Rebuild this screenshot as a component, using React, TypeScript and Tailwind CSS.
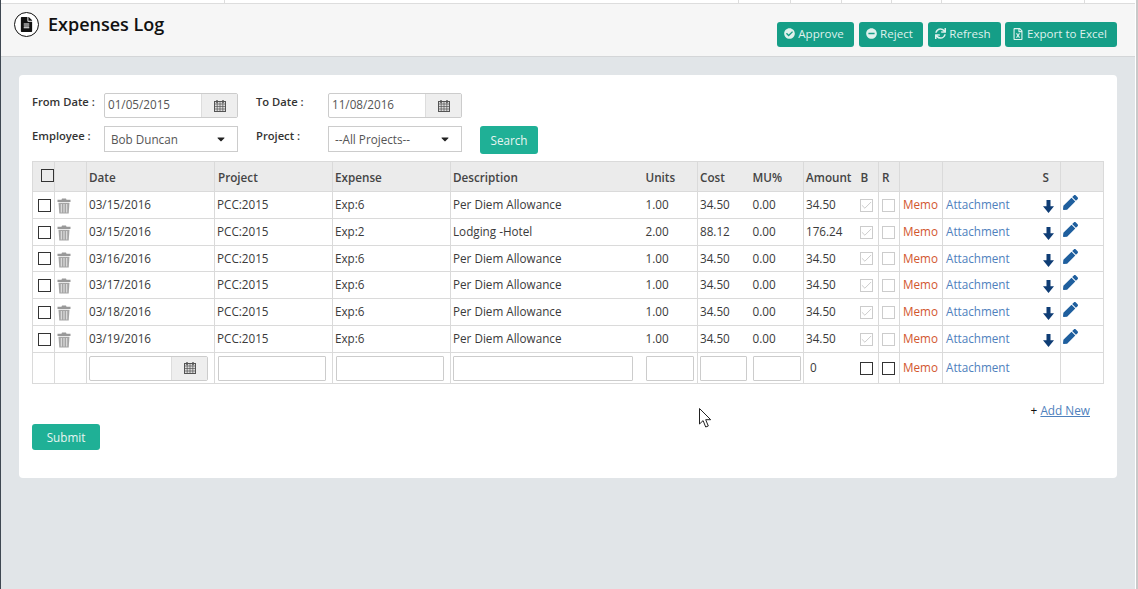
import { Check } from "lucide-react";
import { FaCaretDown, FaCheckCircle, FaFileAlt, FaMinusCircle, FaPen, FaRegFileExcel, FaSync } from "react-icons/fa";

const rows = [
  { date: "03/15/2016", expense: "Exp:6", description: "Per Diem Allowance", units: "1.00", cost: "34.50", amount: "34.50", height: "h-[27px]" },
  { date: "03/15/2016", expense: "Exp:2", description: "Lodging -Hotel", units: "2.00", cost: "88.12", amount: "176.24", height: "h-[27px]" },
  { date: "03/16/2016", expense: "Exp:6", description: "Per Diem Allowance", units: "1.00", cost: "34.50", amount: "34.50", height: "h-[26px]" },
  { date: "03/17/2016", expense: "Exp:6", description: "Per Diem Allowance", units: "1.00", cost: "34.50", amount: "34.50", height: "h-[27px]" },
  { date: "03/18/2016", expense: "Exp:6", description: "Per Diem Allowance", units: "1.00", cost: "34.50", amount: "34.50", height: "h-[27px]" },
  { date: "03/19/2016", expense: "Exp:6", description: "Per Diem Allowance", units: "1.00", cost: "34.50", amount: "34.50", height: "h-[27px]" },
];

// some neighbouring columns share no divider in the table
const td = "border border-[#dadada] pl-[2px] pr-0 py-0 align-middle";
const tdR = "border-y border-l border-r-0 border-[#dadada] pl-[2px] pr-0 py-0 align-middle";
const tdL = "border-y border-r border-l-0 border-[#dadada] pl-[2px] pr-0 py-0 align-middle";
const th = "text-left font-semibold text-[#444] text-[11.7px]";
const labelClass = "w-[72px] text-[11.2px] font-semibold text-[#333]";

const CalendarIcon = () => (
  <svg width="12" height="12" viewBox="0 0 12 12" fill="none" stroke="#555" strokeWidth="1">
    <rect x="0.5" y="1.5" width="11" height="10" fill="#ddd" />
    <path d="M0.5 4h11M0.5 6.5h11M0.5 9h11M3.2 1.5v10M6 1.5v10M8.8 1.5v10" strokeWidth="0.7" />
    <path d="M3 0v3M9 0v3" strokeWidth="1.4" />
  </svg>
);

const TrashIcon = () => (
  <svg width="14" height="16" viewBox="0 0 14 16" className="mt-[2px]">
    <path d="M5 0.5h4l.5 1.2h4V4H.5V1.7h4z" fill="#999" />
    <path d="M1.5 4.8h11l-.8 10.7H2.3z" fill="#a5a5a5" />
    <path d="M4.3 6v8.5M7 6v8.5M9.7 6v8.5" stroke="#e6e6e6" strokeWidth="1" />
  </svg>
);

const ArrowIcon = () => (
  <svg width="11" height="13" viewBox="0 0 11 13" className="mt-[4px]">
    <path d="M3.5 0h4v6.2H11L5.5 13 0 6.2h3.5z" fill="#0f3d75" />
  </svg>
);

const DateField = ({ value, width }: { value: string; width: string }) => (
  <div className={`flex h-[25px] ${width} border border-[#ccc] rounded-[2px] bg-white`}>
    <div className="flex-1 pl-[3px] text-[11.7px] leading-[21px] text-[#555]">{value}</div>
    <div className="w-[36px] flex items-center justify-center bg-[#eee] border-l border-[#ddd]">
      <CalendarIcon />
    </div>
  </div>
);

const SelectField = ({ value }: { value: string }) => (
  <div className="flex items-center justify-between h-[26px] w-[134px] border border-[#ccc] bg-white pl-[6px] pr-[10px]">
    <span className="pt-[2px] text-[11.7px] text-[#555]">{value}</span>
    <FaCaretDown className="text-[#222] text-[12px]" />
  </div>
);

const Box = ({ checked, dark }: { checked?: boolean; dark?: boolean }) => (
  <div className={`w-[13px] h-[13px] border flex items-center justify-center ${dark ? "border-[#333]" : "border-[#ccc]"}`}>
    {checked && <Check className="w-[13px] h-[13px] shrink-0 text-[#bbb]" strokeWidth={1.4} />}
  </div>
);

const TextBox = ({ width }: { width: string }) => (
  <div className={`h-[25px] ${width} border border-[#ccc] bg-white rounded-[1px]`} />
);

const ActionButton = ({ icon, label, width }: { icon: React.ReactNode; label: string; width: string }) => (
  <button className={`h-[25px] ${width} flex items-center justify-center gap-[3px] pr-[3px] pb-[2px] rounded-[3px] bg-[#159e87] text-[11.6px] text-[#dff1ed]`}>
    {icon}
    {label}
  </button>
);

export default function App() {
  return (
    <div className="relative flex h-[589px] w-[1138px] overflow-hidden bg-white font-['Open_Sans',sans-serif]">
      <div className="w-[1135px] h-full bg-[#e1e5e8] border-l border-[#3f4852]">
        {/* Top strip */}
        <div className="flex h-[4px] bg-white border-b border-[#ddd]">
          <div className="w-[224px] border-r border-[#ddd]" />
          <div className="w-[514px] border-r border-[#ddd]" />
          <div className="w-[52px] border-r border-[#ddd]" />
          <div className="w-[51px] border-r border-[#ddd]" />
          <div className="w-[50px] border-r border-[#ddd]" />
          <div className="w-[50px] border-r border-[#ddd]" />
          <div className="w-[143px] border-r border-[#ddd]" />
        </div>

        {/* Header */}
        <div className="flex h-[53px] items-start justify-between bg-[#f6f6f6] border-b border-[#d4d6d8] pl-[13px] pr-[18px]">
          <div className="flex items-start gap-[9px] pt-[8px]">
            <div className="flex h-[25px] w-[25px] items-center justify-center rounded-full border border-[#111] bg-white">
              <FaFileAlt className="text-[15px] text-[#111]" />
            </div>
            <h1 className="text-[18px] leading-[25px] font-semibold text-[#111]">Expenses Log</h1>
          </div>
          <div className="flex gap-[5px] pt-[18px]">
            <ActionButton icon={<FaCheckCircle className="text-[11px]" />} label="Approve" width="w-[77px]" />
            <ActionButton icon={<FaMinusCircle className="text-[11px]" />} label="Reject" width="w-[64px]" />
            <ActionButton icon={<FaSync className="text-[11px]" />} label="Refresh" width="w-[73px]" />
            <div className="-ml-[1px]">
              <ActionButton icon={<FaRegFileExcel className="text-[12px]" />} label="Export to Excel" width="w-[112px]" />
            </div>
          </div>
        </div>

        {/* Card */}
        <div className="ml-[18px] mt-[18px] h-[403px] w-[1098px] rounded-[4px] bg-white pl-[13px] pt-[18px]">
          <div className="flex">
            <div className={`${labelClass} pt-[1px]`}>From Date :</div>
            <DateField value="01/05/2015" width="w-[134px]" />
            <div className={`${labelClass} ml-[18px] pt-[1px]`}>To Date :</div>
            <DateField value="11/08/2016" width="w-[134px]" />
          </div>
          <div className="flex mt-[8px] items-start h-[28px]">
            <div className={`${labelClass} pt-[2px]`}>Employee :</div>
            <SelectField value="Bob Duncan" />
            <div className={`${labelClass} ml-[18px] pt-[2px]`}>Project :</div>
            <SelectField value="--All Projects--" />
            <button className="ml-[18px] h-[28px] w-[58px] rounded-[3px] bg-[#1fb096] pt-[2px] text-[11.7px] text-[#e8f5f2]">Search</button>
          </div>

          {/* Expenses table */}
          <table className="mt-[7px] w-[1071px] table-fixed border-collapse text-[11.7px] text-[#3a3a3a]">
            <colgroup>
              <col className="w-[22px]" />
              <col className="w-[32px]" />
              <col className="w-[128px]" />
              <col className="w-[118px]" />
              <col className="w-[118px]" />
              <col className="w-[193px]" />
              <col className="w-[54px]" />
              <col className="w-[53px]" />
              <col className="w-[53px]" />
              <col className="w-[53px]" />
              <col className="w-[22px]" />
              <col className="w-[21px]" />
              <col className="w-[43px]" />
              <col className="w-[118px]" />
              <col className="w-[43px]" />
            </colgroup>
            <thead>
              <tr className="h-[30px] bg-[#ebebeb]">
                <th className={td}><div className="ml-[6px] mb-[3px]"><Box dark /></div></th>
                <th className={td} />
                <th className={`${td} ${th} pt-[2px]`}>Date</th>
                <th className={`${td} ${th} pt-[2px]`}><span className="pl-[1px]">Project</span></th>
                <th className={`${td} ${th} pt-[2px]`}>Expense</th>
                <th className={`${tdR} ${th} pt-[2px]`}>Description</th>
                <th className={`${tdL} ${th} pt-[2px]`}>Units</th>
                <th className={`${tdR} ${th} pt-[2px]`}>Cost</th>
                <th className={`${tdL} ${th} pt-[2px]`}>MU%</th>
                <th className={`${tdR} ${th} pt-[2px]`}>Amount</th>
                <th className={`${tdL} ${th} pt-[2px]`}><span className="pl-[2px]">B</span></th>
                <th className={`${td} ${th} pt-[2px]`}><span className="pl-[1px]">R</span></th>
                <th className={td} />
                <th className={`${td} ${th} pt-[2px]`}><div className="text-right pr-[11px]">S</div></th>
                <th className={td} />
              </tr>
            </thead>
            <tbody>
              {rows.map((r, i) => (
                <tr key={i} className={r.height}>
                  <td className={td}><div className="ml-[3px]"><Box dark /></div></td>
                  <td className={td}><TrashIcon /></td>
                  <td className={td}>{r.date}</td>
                  <td className={td}>PCC:2015</td>
                  <td className={td}>{r.expense}</td>
                  <td className={tdR}>{r.description}</td>
                  <td className={tdL}>{r.units}</td>
                  <td className={tdR}>{r.cost}</td>
                  <td className={tdL}>0.00</td>
                  <td className={tdR}>{r.amount}</td>
                  <td className={tdL}><div className="ml-[1px]"><Box checked /></div></td>
                  <td className={td}><div className="ml-[1px]"><Box /></div></td>
                  <td className={`${td} text-[#d2562e]`}><span className="pl-[1px]">Memo</span></td>
                  <td className={`${td} text-[#4f81bd]`}>
                    <div className="flex items-center justify-between pl-[1px] pr-[6px]">
                      Attachment
                      <ArrowIcon />
                    </div>
                  </td>
                  <td className={td}>
                    <FaPen className="mb-[5px] text-[15px] text-[#1f5f9e]" />
                  </td>
                </tr>
              ))}
              <tr className="h-[31px]">
                <td className={td} />
                <td className={td} />
                <td className={td}><DateField value="" width="w-[119px]" /></td>
                <td className={td}><div className="ml-[1px]"><TextBox width="w-[108px]" /></div></td>
                <td className={td}><div className="ml-[1px]"><TextBox width="w-[108px]" /></div></td>
                <td className={tdR}><TextBox width="w-[180px]" /></td>
                <td className={tdL}><TextBox width="w-[48px]" /></td>
                <td className={tdR}><TextBox width="w-[47px]" /></td>
                <td className={tdL}><TextBox width="w-[48px]" /></td>
                <td className={tdR}><span className="pl-[4px]">0</span></td>
                <td className={tdL}><div className="ml-[1px]"><Box dark /></div></td>
                <td className={td}><div className="ml-[1px]"><Box dark /></div></td>
                <td className={`${td} text-[#d2562e]`}><span className="pl-[1px]">Memo</span></td>
                <td className={`${td} text-[#4f81bd]`}><span className="pl-[1px]">Attachment</span></td>
                <td className={td} />
              </tr>
            </tbody>
          </table>

          <div className="mt-[18px] flex w-[1058px] justify-end text-[11.8px] text-[#111]">
            <span>+&nbsp;<a className="text-[#4f81bd] underline">Add New</a></span>
          </div>
          <button className="mt-[4px] h-[26px] w-[68px] rounded-[3px] bg-[#1fb096] pt-[2px] text-[11.7px] text-[#e8f5f2]">Submit</button>
        </div>
      </div>

      {/* Right edge of the captured window */}
      <div className="w-[3px] h-full bg-[#c9c9c9] border-l border-white" />

      {/* Mouse pointer caught in the capture */}
      <svg className="absolute left-[699px] top-[408px]" width="14" height="20" viewBox="0 0 14 20">
        <path d="M0.5 0.5v15.5l3.6-3.4 2.6 6.4 2.6-1-2.6-6.3h5z" fill="#fff" stroke="#222" strokeWidth="1" />
      </svg>
    </div>
  );
}
